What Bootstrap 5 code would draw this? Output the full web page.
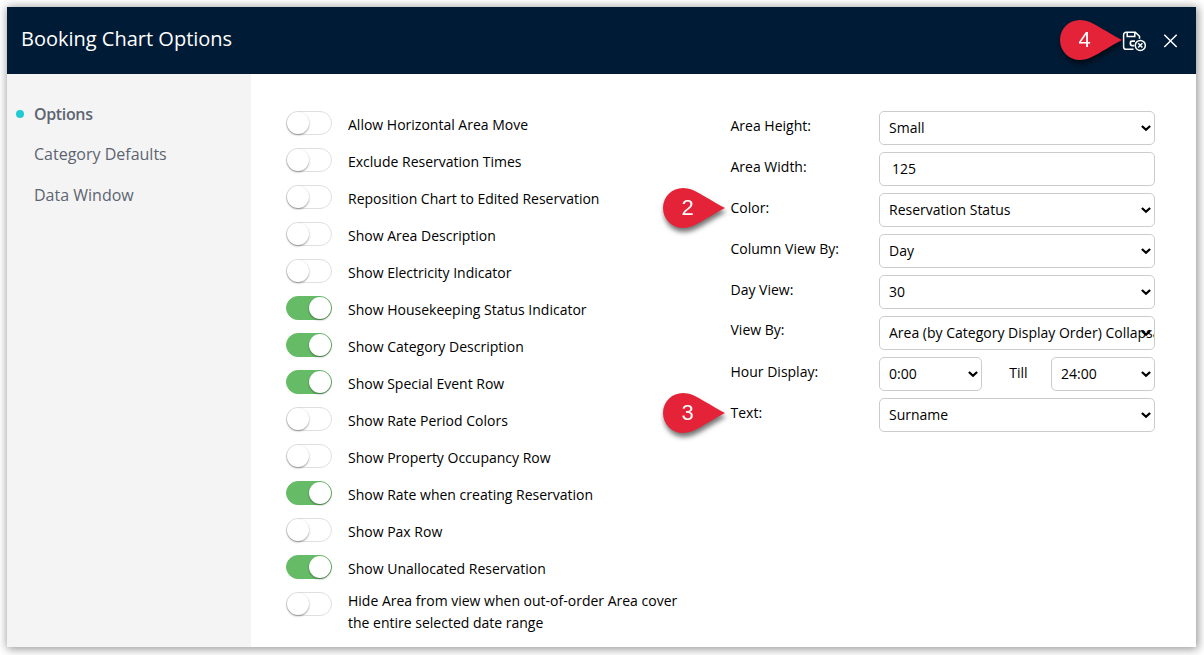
<!DOCTYPE html>
<html lang="en">
<head>
<meta charset="utf-8">
<title>Booking Chart Options</title>
<meta name="viewport" content="width=device-width, initial-scale=1">
<link href="https://cdn.jsdelivr.net/npm/bootstrap@5.3.0/dist/css/bootstrap.min.css" rel="stylesheet">
<style>
  body { font-family: "Open Sans", "Noto Sans", sans-serif; font-size: 14px; color: #000; background: #fff; height: 655px; overflow: hidden; padding: 7px 8px 8px 7px; }
  .dialog-box { height: 640px; background: #fff; box-shadow: 1px 1px 9px 1px rgba(0,0,0,.42); }
  .dialog-head { height: 67px; background: #001b35; color: #fff; padding: 0 17px 0 14px; }
  .dialog-head h1 { font-size: 20px; font-weight: 400; line-height: 28px; margin: 0 0 4px; }
  .icon-btn { background: none; border: 0; padding: 0; color: #fff; line-height: 0; }
  .save-btn { margin-right: 15px; }
  .side-menu { width: 244px; background: #f4f4f4; padding: 28px 0 0 9px; }
  .side-menu a { font-size: 16px; line-height: 24px; height: 41px; color: #5d6471; text-decoration: none; padding-left: 18px; display: block; position: relative; }
  .side-menu a.current { height: 40px; font-weight: 600; letter-spacing: -.35px; }
  .side-menu a.current::before { content: ""; position: absolute; left: 0; top: 8px; width: 8px; height: 8px; border-radius: 50%; background: #20cbd4; }
  .toggles { width: 445px; padding: 37px 0 0 35px; }
  .toggle-row { height: 37px; gap: 16px; }
  .toggle-row label { line-height: 22px; padding-top: 3px; }
  .toggle-row.two-line label { padding-top: 0; margin-top: -2px; }
  .form-check-input.pill { width: 46px; height: 24px; margin: 0; flex: none; border: 1px solid #dfdfdf; border-radius: 12px; background: #fff; position: relative; }
  .form-check-input.pill::after { content: ""; position: absolute; left: 0; top: 0; width: 22px; height: 22px; border-radius: 50%; background: #fff; box-shadow: 0 1px 2px rgba(0,0,0,.42); }
  .form-check-input.pill:checked { background: #66bc66; border-color: #66bc66; }
  .form-check-input.pill:checked::after { left: 22px; }
  .settings { padding: 37px 0 0 34.5px; width: 459px; }
  .setting-row { height: 41px; }
  .setting-row > label { width: 148.5px; line-height: 20px; padding-top: 5px; flex: none; }
  .setting-row .form-select, .setting-row .form-control { height: 34px; font-size: 14px; line-height: 20px; color: #000; border: 1px solid #ccc; border-radius: 5px; padding: 6px 0 6px 9px; }
  .setting-row .form-select { text-overflow: clip; background: #fff url("data:image/svg+xml,%3Csvg xmlns='http://www.w3.org/2000/svg' width='10' height='7'%3E%3Cpath d='M.9 1 5 4.8 9.1 1' fill='none' stroke='%23000' stroke-width='2.3'/%3E%3C/svg%3E") no-repeat right 3px top 13px / 10px 7px; }
  .setting-row .form-control { padding: 5px 0 7px 12px; }
  .marker { position: absolute; width: 62px; height: 40px; color: #fff; filter: drop-shadow(1px 4px 2.5px rgba(0,0,0,.55)); }
  .marker svg { position: absolute; left: 0; top: 0; overflow: visible; }
  .marker span { position: absolute; left: 0; top: 0; width: 49px; text-align: center; font: 22px/40px "Liberation Sans", sans-serif; }
</style>
</head>
<body>
<div class="dialog-box d-flex flex-column">
  <header class="dialog-head d-flex align-items-center justify-content-between">
    <h1>Booking Chart Options</h1>
    <div class="d-flex align-items-center position-relative">
      <div class="marker" style="left:-62px;top:-10px"><svg width="62" height="40" fill="#e42338"><path d="M20 0C32 0 44 11 62 20 44 29 32 40 20 40A20 20 0 0 1 20 0Z"/></svg><span>4</span></div>
      <button class="icon-btn save-btn" aria-label="Save and close">
        <svg width="25" height="22" viewBox="0 0 25 22" fill="none" stroke="#fff" stroke-width="1.5">
          <path d="M11.5 19.3H4.2a2.6 2.6 0 0 1-2.6-2.6V4.9A2.6 2.6 0 0 1 4.2 2.3H13.3L17.5 6.3V8.7M5.2 2.3V6.6H12.8V2.3"/>
          <path d="M13 11.2H10.2Q8.4 11.2 8.4 12.8V14Q8.4 15.6 10.2 15.6H12.2" stroke-width="1.7"/>
          <circle cx="18.3" cy="15.4" r="5"/><path d="M16.2 13.3 20.4 17.5M20.4 13.3 16.2 17.5"/>
        </svg>
      </button>
      <button class="icon-btn" aria-label="Close"><svg width="17" height="14" viewBox="0 0 17 14" fill="none" stroke="#fff" stroke-width="1.5"><path d="M2.3.7 14.7 13M14.7.7 2.3 13"/></svg></button>
    </div>
  </header>
  <div class="d-flex flex-grow-1">
    <nav class="side-menu">
      <a class="current" href="#">Options</a>
      <a href="#">Category Defaults</a>
      <a href="#">Data Window</a>
    </nav>
    <section class="toggles">
      <div class="toggle-row d-flex"><input class="form-check-input pill" type="checkbox" id="t1"><label for="t1">Allow Horizontal Area Move</label></div>
      <div class="toggle-row d-flex"><input class="form-check-input pill" type="checkbox" id="t2"><label for="t2">Exclude Reservation Times</label></div>
      <div class="toggle-row d-flex"><input class="form-check-input pill" type="checkbox" id="t3"><label for="t3">Reposition Chart to Edited Reservation</label></div>
      <div class="toggle-row d-flex"><input class="form-check-input pill" type="checkbox" id="t4"><label for="t4">Show Area Description</label></div>
      <div class="toggle-row d-flex"><input class="form-check-input pill" type="checkbox" id="t5"><label for="t5">Show Electricity Indicator</label></div>
      <div class="toggle-row d-flex"><input class="form-check-input pill" type="checkbox" id="t6" checked><label for="t6">Show Housekeeping Status Indicator</label></div>
      <div class="toggle-row d-flex"><input class="form-check-input pill" type="checkbox" id="t7" checked><label for="t7">Show Category Description</label></div>
      <div class="toggle-row d-flex"><input class="form-check-input pill" type="checkbox" id="t8" checked><label for="t8">Show Special Event Row</label></div>
      <div class="toggle-row d-flex"><input class="form-check-input pill" type="checkbox" id="t9"><label for="t9">Show Rate Period Colors</label></div>
      <div class="toggle-row d-flex"><input class="form-check-input pill" type="checkbox" id="t10"><label for="t10">Show Property Occupancy Row</label></div>
      <div class="toggle-row d-flex"><input class="form-check-input pill" type="checkbox" id="t11" checked><label for="t11">Show Rate when creating Reservation</label></div>
      <div class="toggle-row d-flex"><input class="form-check-input pill" type="checkbox" id="t12"><label for="t12">Show Pax Row</label></div>
      <div class="toggle-row d-flex"><input class="form-check-input pill" type="checkbox" id="t13" checked><label for="t13">Show Unallocated Reservation</label></div>
      <div class="toggle-row two-line d-flex"><input class="form-check-input pill" type="checkbox" id="t14"><label for="t14">Hide Area from view when out-of-order Area cover<br>the entire selected date range</label></div>
    </section>
    <section class="settings">
      <div class="setting-row d-flex"><label for="s1">Area Height:</label><select class="form-select" id="s1"><option>Small</option></select></div>
      <div class="setting-row d-flex"><label for="s2">Area Width:</label><input class="form-control" id="s2" value="125"></div>
      <div class="setting-row d-flex position-relative"><div class="marker" style="left:-67.5px;top:-5px"><svg width="62" height="40" fill="#e42338"><path d="M20 0C32 0 44 11 62 20 44 29 32 40 20 40A20 20 0 0 1 20 0Z"/></svg><span>2</span></div><label for="s3">Color:</label><select class="form-select" id="s3"><option>Reservation Status</option></select></div>
      <div class="setting-row d-flex"><label for="s4">Column View By:</label><select class="form-select" id="s4"><option>Day</option></select></div>
      <div class="setting-row d-flex"><label for="s5">Day View:</label><select class="form-select" id="s5"><option>30</option></select></div>
      <div class="setting-row d-flex"><label class="pt-1" for="s6">View By:</label><select class="form-select" id="s6"><option>Area (by Category Display Order) Collapsable</option></select></div>
      <div class="setting-row d-flex"><label for="s7">Hour Display:</label><select class="form-select" id="s7" style="width:103px"><option>0:00</option></select><label class="text-center ps-1" for="s8" style="width:69px;padding-top:6px">Till</label><select class="form-select" id="s8" style="width:104px"><option>24:00</option></select></div>
      <div class="setting-row d-flex position-relative"><div class="marker" style="left:-67.5px;top:-5px"><svg width="62" height="40" fill="#e42338"><path d="M20 0C32 0 44 11 62 20 44 29 32 40 20 40A20 20 0 0 1 20 0Z"/></svg><span>3</span></div><label for="s9">Text:</label><select class="form-select" id="s9"><option>Surname</option></select></div>
    </section>
  </div>
</div>
<script src="https://cdn.jsdelivr.net/npm/bootstrap@5.3.0/dist/js/bootstrap.bundle.min.js"></script>
</body>
</html>
